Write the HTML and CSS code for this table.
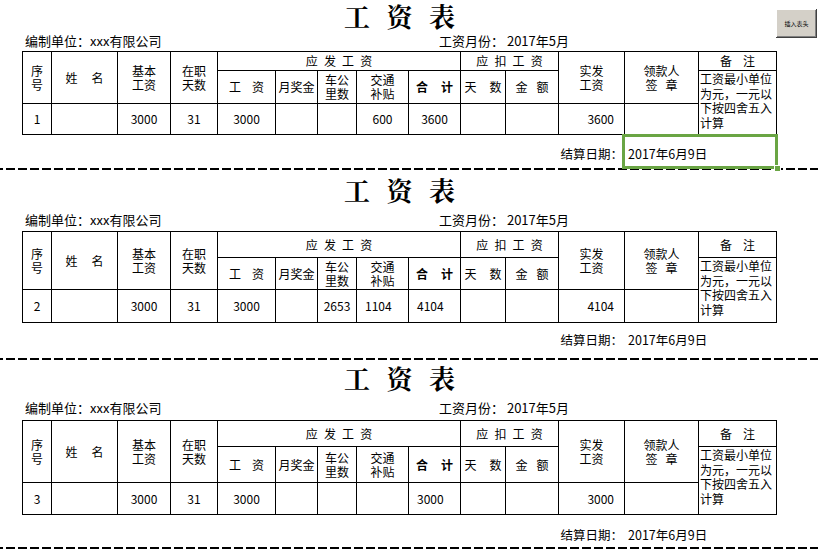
FILE: index.html
```html
<!DOCTYPE html>
<html lang="zh-CN">
<head>
<meta charset="utf-8">
<title>工资表</title>
<link rel="stylesheet" href="styles.css">
</head>
<body>
<div class="page">
  <button class="insert-btn" type="button">插入表头</button>

  <section class="block b1">
    <div class="sheet">
      <div class="title">工 资 表</div>
      <div class="info"><span class="unit">编制单位：xxx有限公司</span><span class="month">工资月份： 2017年5月</span></div>
      <table class="pay">
        <colgroup>
          <col class="c29"><col class="c66"><col class="c53"><col class="c47"><col class="c58"><col class="c42"><col class="c39"><col class="c52"><col class="c52"><col class="c45"><col class="c53"><col class="c66"><col class="c74"><col class="c78">
        </colgroup>
        <tr class="hr1">
          <td rowspan="2">序<br>号</td>
          <td rowspan="2" class="w11">姓 名</td>
          <td rowspan="2">基本<br>工资</td>
          <td rowspan="2">在职<br>天数</td>
          <td colspan="5" class="w3">应 发 工 资</td>
          <td colspan="2" class="w3">应 扣 工 资</td>
          <td rowspan="2">实发<br>工资</td>
          <td rowspan="2" class="w5">领款人<br>签 章</td>
          <td class="w8">备 注</td>
        </tr>
        <tr class="hr2">
          <td class="w8">工 资</td>
          <td>月奖金</td>
          <td>车公<br>里数</td>
          <td>交通<br>补贴</td>
          <td class="w10 bold">合 计</td>
          <td class="w10">天 数</td>
          <td class="w6">金 额</td>
          <td rowspan="2" class="note">工资最小单位为元，一元以下按四舍五入计算</td>
        </tr>
        <tr class="dr">
          <td>1</td><td></td><td>3000</td><td>31</td><td>3000</td><td></td><td></td><td>600</td><td>3600</td><td></td><td></td><td class="right">3600</td><td></td>
        </tr>
      </table>
      <div class="date"><span class="label">结算日期：</span><span class="value selected">2017年6月9日</span></div>
    </div>
    <div class="dash"></div>
  </section>

  <section class="block b2">
    <div class="sheet">
      <div class="title">工 资 表</div>
      <div class="info"><span class="unit">编制单位：xxx有限公司</span><span class="month">工资月份： 2017年5月</span></div>
      <table class="pay">
        <colgroup>
          <col class="c29"><col class="c66"><col class="c53"><col class="c47"><col class="c58"><col class="c42"><col class="c39"><col class="c52"><col class="c52"><col class="c45"><col class="c53"><col class="c66"><col class="c74"><col class="c78">
        </colgroup>
        <tr class="hr1">
          <td rowspan="2">序<br>号</td>
          <td rowspan="2" class="w11">姓 名</td>
          <td rowspan="2">基本<br>工资</td>
          <td rowspan="2">在职<br>天数</td>
          <td colspan="5" class="w3">应 发 工 资</td>
          <td colspan="2" class="w3">应 扣 工 资</td>
          <td rowspan="2">实发<br>工资</td>
          <td rowspan="2" class="w5">领款人<br>签 章</td>
          <td class="w8">备 注</td>
        </tr>
        <tr class="hr2">
          <td class="w8">工 资</td>
          <td>月奖金</td>
          <td>车公<br>里数</td>
          <td>交通<br>补贴</td>
          <td class="w10 bold">合 计</td>
          <td class="w10">天 数</td>
          <td class="w6">金 额</td>
          <td rowspan="2" class="note">工资最小单位为元，一元以下按四舍五入计算</td>
        </tr>
        <tr class="dr">
          <td>2</td><td></td><td>3000</td><td>31</td><td>3000</td><td></td><td>2653</td><td class="left">1104</td><td class="left">4104</td><td></td><td></td><td class="right">4104</td><td></td>
        </tr>
      </table>
      <div class="date"><span class="label">结算日期：</span><span class="value">2017年6月9日</span></div>
    </div>
    <div class="dash"></div>
  </section>

  <section class="block b3">
    <div class="sheet">
      <div class="title">工 资 表</div>
      <div class="info"><span class="unit">编制单位：xxx有限公司</span><span class="month">工资月份： 2017年5月</span></div>
      <table class="pay">
        <colgroup>
          <col class="c29"><col class="c66"><col class="c53"><col class="c47"><col class="c58"><col class="c42"><col class="c39"><col class="c52"><col class="c52"><col class="c45"><col class="c53"><col class="c66"><col class="c74"><col class="c78">
        </colgroup>
        <tr class="hr1">
          <td rowspan="2">序<br>号</td>
          <td rowspan="2" class="w11">姓 名</td>
          <td rowspan="2">基本<br>工资</td>
          <td rowspan="2">在职<br>天数</td>
          <td colspan="5" class="w3">应 发 工 资</td>
          <td colspan="2" class="w3">应 扣 工 资</td>
          <td rowspan="2">实发<br>工资</td>
          <td rowspan="2" class="w5">领款人<br>签 章</td>
          <td class="w8">备 注</td>
        </tr>
        <tr class="hr2">
          <td class="w8">工 资</td>
          <td>月奖金</td>
          <td>车公<br>里数</td>
          <td>交通<br>补贴</td>
          <td class="w10 bold">合 计</td>
          <td class="w10">天 数</td>
          <td class="w6">金 额</td>
          <td rowspan="2" class="note">工资最小单位为元，一元以下按四舍五入计算</td>
        </tr>
        <tr class="dr">
          <td>3</td><td></td><td>3000</td><td>31</td><td>3000</td><td></td><td></td><td></td><td class="left">3000</td><td></td><td></td><td class="right">3000</td><td></td>
        </tr>
      </table>
      <div class="date"><span class="label">结算日期：</span><span class="value">2017年6月9日</span></div>
    </div>
    <div class="dash"></div>
  </section>
</div>
</body>
</html>
```

FILE: styles.css
```css
html, body {
  margin: 0;
  padding: 0;
  background: #ffffff;
}

body {
  font-family: "Noto Sans CJK SC", "Noto Sans", sans-serif;
  color: #000000;
}

.page {
  position: relative;
  width: 835px;
  height: 552px;
  overflow: hidden;
}

.insert-btn {
  position: absolute;
  left: 776px;
  top: 9px;
  width: 41px;
  height: 29px;
  padding: 0;
  margin: 0;
  border: none;
  background: #d4d0c8;
  box-shadow: inset -1px -1px 0 #404040, inset 1px 1px 0 #ffffff, inset -2px -2px 0 #808080;
  font-family: "Noto Sans CJK SC", sans-serif;
  font-size: 6px;
  line-height: 8px;
  color: #000000;
}

.sheet {
  margin-left: 22px;
  width: 755px;
}

.title {
  display: flex;
  align-items: center;
  justify-content: center;
  font-family: "Noto Serif CJK SC", "Noto Sans CJK SC", serif;
  font-size: 26px;
  font-weight: 700;
  line-height: 26px;
  word-spacing: 10px;
}

.b1 .title {
  align-items: flex-start;
  padding-top: 3px;
  box-sizing: border-box;
}

.info {
  display: flex;
  align-items: center;
  font-size: 13px;
  line-height: 16px;
}

.info .unit {
  width: 414px;
  padding-left: 3px;
}

.date {
  display: flex;
  font-size: 12.5px;
  line-height: 14px;
}

.date .label {
  width: 601px;
  text-align: right;
  padding-right: 1px;
  padding-top: var(--date-pad, 12px);
}

.date .value {
  width: 148px;
  padding-left: 4px;
  padding-top: var(--date-pad, 12px);
  position: relative;
}

.date .value.selected::before {
  content: "";
  position: absolute;
  left: -2px;
  right: -2px;
  top: -1px;
  bottom: -1px;
  border: 3px solid #6aa544;
}

.date .value.selected::after {
  content: "";
  position: absolute;
  right: -5px;
  bottom: -4px;
  width: 5px;
  height: 5px;
  background: #6aa544;
  border: 1px solid #ffffff;
}

.dash {
  width: 818px;
  height: 2px;
  background: repeating-linear-gradient(90deg, #000000 0, #000000 9px, transparent 9px, transparent 12px);
  background-position: -6px 0;
}

/* table */
.pay {
  width: 755px;
  table-layout: fixed;
  border-collapse: collapse;
  font-size: 12px;
  line-height: 14px;
}

.pay td {
  border: 1px solid #000000;
  padding: 0;
  text-align: center;
  vertical-align: middle;
  white-space: nowrap;
  overflow: hidden;
}

.c29 { width: 29px; }
.c66 { width: 66px; }
.c53 { width: 53px; }
.c47 { width: 47px; }
.c58 { width: 58px; }
.c42 { width: 42px; }
.c39 { width: 39px; }
.c52 { width: 52px; }
.c45 { width: 45px; }
.c74 { width: 74px; }
.c78 { width: 78px; }

.pay .note {
  white-space: normal;
  text-align: left;
  vertical-align: top;
  padding: 1px 0 0 1px;
  line-height: 14.5px;
}

.pay .right {
  text-align: right;
  padding-right: 10px;
}

.pay .left {
  text-align: left;
  padding-left: 8px;
}

.bold { font-weight: 700; }
.w3 { word-spacing: 3.5px; }
.w5 { word-spacing: 5.5px; }
.w6 { word-spacing: 6.5px; }
.w8 { word-spacing: 8.5px; }
.w10 { word-spacing: 10.5px; }
.w11 { word-spacing: 11.5px; }

/* block 1 */
.b1 .title { height: 31px; }
.b1 .info { height: 20px; }
.b1 .hr1 { height: 19px; }
.b1 .hr2 { height: 33px; }
.b1 .dr { height: 31px; }
.b1 .date { height: 33px; --date-pad: 12px; }

/* block 2 */
.b2 .title { height: 39px; }
.b2 .info { height: 22px; }
.b2 .hr1 { height: 26px; }
.b2 .hr2 { height: 32px; }
.b2 .dr { height: 33px; }
.b2 .date { height: 35px; --date-pad: 10px; }

/* block 3 */
.b3 .title { height: 36px; }
.b3 .info { height: 24px; }
.b3 .hr1 { height: 26px; }
.b3 .hr2 { height: 36px; }
.b3 .dr { height: 32px; }
.b3 .date { height: 32px; --date-pad: 13px; }
```
